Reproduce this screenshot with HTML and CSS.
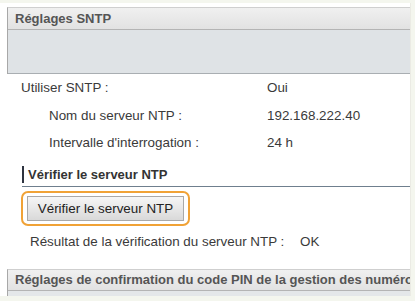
FILE: index.html
```html
<!DOCTYPE html>
<html>
    <head>
        <meta charset="utf-8">
        <link rel="stylesheet" href="styles.css">
    </head>
    <body>
        <div class="page">
            <section class="panel">
                <h2 class="panelTitulo">Réglages SNTP</h2>
                <div class="panelCuerpo"></div>
            </section>

            <div class="filas">
                <div class="fila">
                    <span class="etiqueta">Utiliser SNTP :</span>
                    <span class="valor">Oui</span>
                </div>
                <div class="fila sub">
                    <span class="etiqueta">Nom du serveur NTP :</span>
                    <span class="valor">192.168.222.40</span>
                </div>
                <div class="fila sub">
                    <span class="etiqueta">Intervalle d'interrogation :</span>
                    <span class="valor">24 h</span>
                </div>
            </div>

            <h3 class="subtitulo">Vérifier le serveur NTP</h3>

            <div class="zonaBoton">
                <div class="resaltado">
                    <button class="boton">Vérifier le serveur NTP</button>
                </div>
            </div>

            <div class="resultado">
                <span class="etiqueta">Résultat de la vérification du serveur NTP :</span>
                <span class="ok">OK</span>
            </div>

            <section class="panel segundo">
                <h2 class="panelTitulo">Réglages de confirmation du code PIN de la gestion des numéros</h2>
                <div class="panelCuerpo"></div>
            </section>
        </div>
    </body>
</html>
```

FILE: styles.css
```css
html,
body {
    margin : 0;
    padding: 0;
}

body {
    background-color: #f4f6ee;
    color           : #3a3a3a;
    font-family     : "Liberation Sans", Arial, sans-serif;
    font-size       : 13.4px;
    height          : 301px;
    overflow        : hidden;
}

.page {
    background-color: #fff;
    border-right    : 1px solid #ebebe4;
    box-sizing      : border-box;
    height          : 293px;
    margin          : 3px 4px 0 0;
    overflow        : hidden;
    padding         : 4px 0 0 7px;
}

/* Paneles grises */
.panel {
    border-left: 1px solid #a8a8a8;
    border-top : 1px solid #cfcfcf;
}

.panelTitulo {
    background   : linear-gradient( #f0f0f0, #e2e2e2 );
    border-bottom: 1px solid #b4b4b4;
    color        : #555;
    font-size    : 13px;
    height       : 21px;
    line-height  : 21px;
    margin       : 0;
    overflow     : hidden;
    padding-left : 7px;
    white-space  : nowrap;
}

.panelCuerpo {
    background-color: #dfe3e6;
    border-bottom   : 1px solid #a9aeb2;
    height          : 43px;
}

.panel.segundo {
    margin-top: 17px;
}

.panel.segundo .panelTitulo {
    height     : 20px;
    line-height: 20px;
}

.panel.segundo .panelCuerpo {
    background-color: #e4e7e9;
    border-bottom   : none;
    height          : 10px;
}

/* Filas de datos */
.fila {
    display    : flex;
    height     : 27.5px;
    line-height: 27px;
}

.fila .etiqueta {
    padding-left: 14px;
    width       : 246px;
}

.fila.sub .etiqueta {
    padding-left: 42px;
    width       : 218px;
}

/* Subtítulo */
.subtitulo {
    border-bottom: 1px solid #6f7f8e;
    color        : #333;
    font-size    : 13px;
    height       : 20px;
    line-height  : 18px;
    margin       : 9.5px 0 0 15px;
    padding-left : 6px;
    position     : relative;
}

.subtitulo::before {
    background-color: #2e3440;
    bottom          : 3px;
    content         : "";
    left            : 0;
    position        : absolute;
    top             : 0;
    width           : 2px;
}

/* Botón */
.zonaBoton {
    padding: 4px 0 0 14px;
}

.resaltado {
    border       : 2px solid #f0a236;
    border-radius: 7px;
    display      : inline-block;
    padding      : 3px 4px;
}

.boton {
    background : linear-gradient( #f6f6f6, #d9d9d9 );
    border     : 1px solid #a9a9a9;
    color      : #222;
    display    : block;
    font-family: "Liberation Sans", Arial, sans-serif;
    font-size  : 13.4px;
    height     : 25px;
    padding    : 0;
    white-space: nowrap;
    width      : 157px;
}

.resultado {
    display    : flex;
    line-height: 20px;
    padding    : 6px 0 0 23px;
}

.resultado .etiqueta {
    width: 270px;
}
```
